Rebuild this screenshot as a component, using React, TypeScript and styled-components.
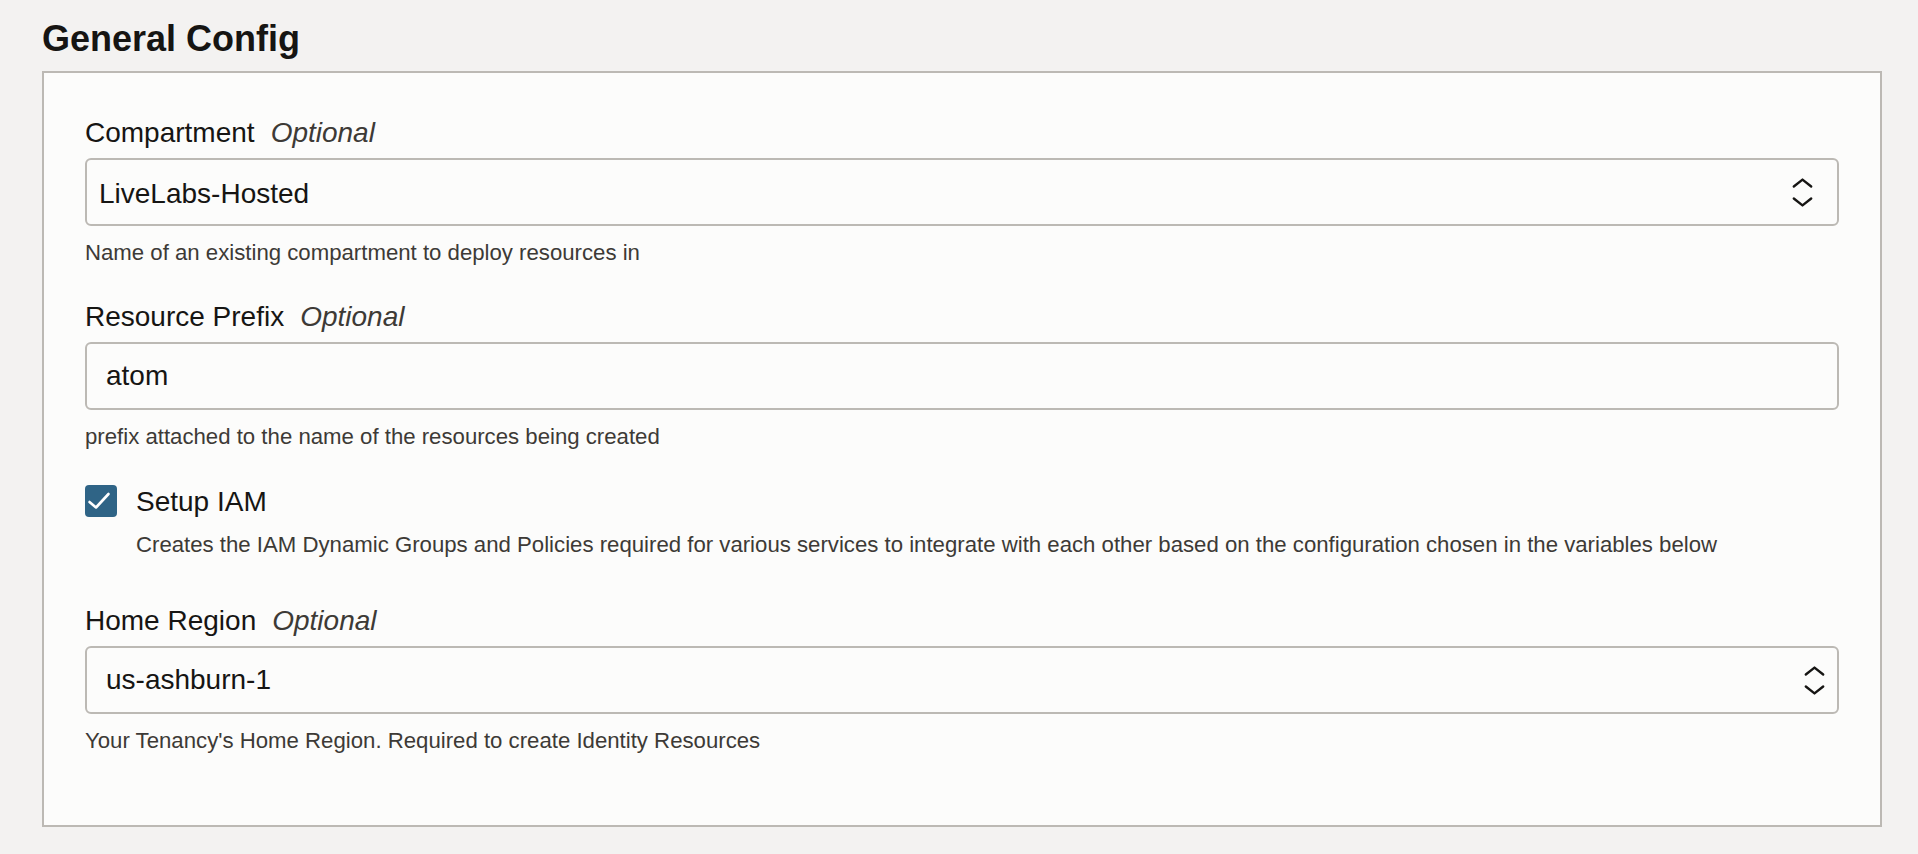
import React from "react";
import styled, { createGlobalStyle } from "styled-components";

const GlobalStyle = createGlobalStyle`
  html, body {
    margin: 0;
    padding: 0;
    background: #f3f2f1;
    font-family: "Liberation Sans", Arial, Helvetica, sans-serif;
    color: #161513;
  }
`;

const Page = styled.div`
  padding: 19px 36px 27px 42px;
  display: flex;
  flex-direction: column;
`;

const Heading = styled.h2`
  margin: 0 0 12px 0;
  font-size: 36px;
  line-height: 40px;
  font-weight: 700;
  color: #161513;
`;

const Panel = styled.section`
  width: 1840px;
  box-sizing: border-box;
  border: 2px solid #bcb9b4;
  background: #fcfcfb;
  padding: 44px 41px 70px 41px;
  display: flex;
  flex-direction: column;
`;

const Field = styled.div<{ $gap: number }>`
  display: flex;
  flex-direction: column;
  margin-top: ${(p) => p.$gap}px;
`;

const Label = styled.div`
  display: flex;
  align-items: baseline;
  font-size: 28px;
  line-height: 32px;
  margin-bottom: 9px;
  color: #161513;
`;

const Optional = styled.span`
  font-style: italic;
  color: #3d3a36;
  margin-left: 16px;
`;

const SelectBox = styled.div<{ $padLeft: number; $padRight: number; $shift: number }>`
  height: 68px;
  box-sizing: border-box;
  border: 2px solid #bcb9b4;
  border-radius: 6px;
  background: #fcfcfb;
  display: flex;
  align-items: center;
  justify-content: space-between;
  padding: ${(p) => p.$shift}px ${(p) => p.$padRight}px 0 ${(p) => p.$padLeft}px;
  font-size: 28px;
  line-height: 32px;
  color: #161513;
`;

const IconWrap = styled.span<{ $shift: number }>`
  display: flex;
  margin-top: ${(p) => -p.$shift}px;
`;

const TextInput = styled.input`
  height: 68px;
  box-sizing: border-box;
  border: 2px solid #bcb9b4;
  border-radius: 6px;
  background: #fcfcfb;
  padding: 0 19px;
  font-family: "Liberation Sans", Arial, Helvetica, sans-serif;
  font-size: 28px;
  color: #161513;
  outline: none;
  width: 100%;
`;

const Helper = styled.div<{ $indent?: number }>`
  margin-top: 13px;
  margin-left: ${(p) => p.$indent ?? 0}px;
  font-size: 22.2px;
  line-height: 28px;
  color: #3d3a36;
`;

const CheckRow = styled.div`
  display: flex;
  align-items: flex-start;
  gap: 19px;
`;

const CheckBox = styled.span`
  width: 32px;
  height: 32px;
  border-radius: 4px;
  background: #2f6486;
  display: flex;
  align-items: center;
  justify-content: center;
  flex: none;
`;

const CheckLabel = styled.span`
  font-size: 28px;
  line-height: 34px;
  color: #161513;
`;

const CheckHelper = styled(Helper)`
  margin-top: 12px;
`;

const Chevrons = () => (
  <svg width="21" height="29" viewBox="0 0 21 29" fill="none">
    <path d="M1.8 8.5 L10.5 1.6 L19.2 8.5" stroke="#161513" strokeWidth="2.4" strokeLinecap="round" strokeLinejoin="round" />
    <path d="M1.8 20.5 L10.5 27.4 L19.2 20.5" stroke="#161513" strokeWidth="2.4" strokeLinecap="round" strokeLinejoin="round" />
  </svg>
);

const Check = () => (
  <svg width="32" height="32" viewBox="0 0 32 32" fill="none">
    <path d="M4.5 17 L11 22.5 L23.5 9" stroke="#ffffff" strokeWidth="2.6" strokeLinecap="round" strokeLinejoin="round" />
  </svg>
);

export default function App() {
  return (
    <>
      <GlobalStyle />
      <Page>
        <Heading>General Config</Heading>
        <Panel>
          <Field $gap={0}>
            <Label>
              Compartment<Optional>Optional</Optional>
            </Label>
            <SelectBox $padLeft={12} $padRight={24} $shift={4}>
              <span>LiveLabs-Hosted</span>
              <IconWrap $shift={4}>
                <Chevrons />
              </IconWrap>
            </SelectBox>
            <Helper>Name of an existing compartment to deploy resources in</Helper>
          </Field>

          <Field $gap={34}>
            <Label>
              Resource Prefix<Optional>Optional</Optional>
            </Label>
            <TextInput readOnly value="atom" />
            <Helper>prefix attached to the name of the resources being created</Helper>
          </Field>

          <Field $gap={34}>
            <CheckRow>
              <CheckBox>
                <Check />
              </CheckBox>
              <CheckLabel>Setup IAM</CheckLabel>
            </CheckRow>
            <CheckHelper $indent={51}>
              Creates the IAM Dynamic Groups and Policies required for various services to integrate with each other based on the configuration chosen in the variables below
            </CheckHelper>
          </Field>

          <Field $gap={46}>
            <Label>
              Home Region<Optional>Optional</Optional>
            </Label>
            <SelectBox $padLeft={19} $padRight={12} $shift={0}>
              <span>us-ashburn-1</span>
              <IconWrap $shift={0}>
                <Chevrons />
              </IconWrap>
            </SelectBox>
            <Helper>Your Tenancy's Home Region. Required to create Identity Resources</Helper>
          </Field>
        </Panel>
      </Page>
    </>
  );
}
